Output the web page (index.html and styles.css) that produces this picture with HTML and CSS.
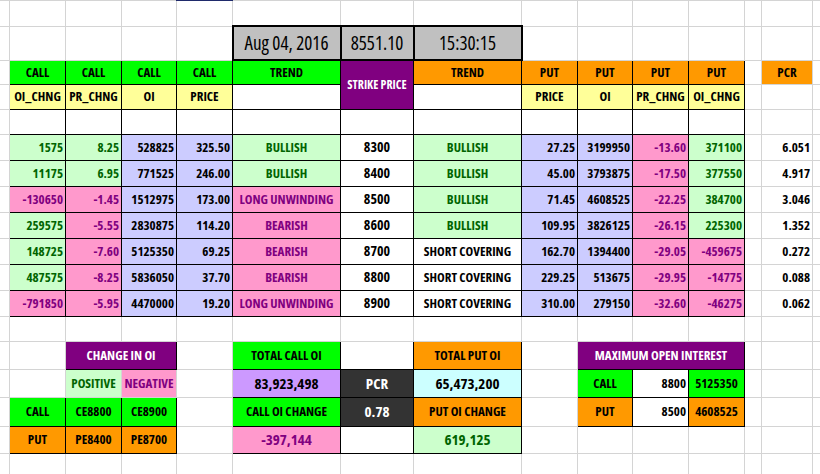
FILE: index.html
```html
<!DOCTYPE html>
<html>
<head>
<meta charset="utf-8">
<link rel="stylesheet" href="styles.css">
</head>
<body>
<table class="sheet">
<colgroup>
<col class="ca"><col class="cb"><col class="cc"><col class="cd"><col class="ce"><col class="cf"><col class="cg"><col class="ch"><col class="ci"><col class="cj"><col class="ck"><col class="cl"><col class="cm"><col class="cn"><col class="co">
</colgroup>
<tr class="r1"><td></td><td></td><td></td><td></td><td class="sel"></td><td></td><td></td><td></td><td></td><td></td><td></td><td></td><td></td><td></td><td></td></tr>
<tr class="r2"><td></td><td></td><td></td><td></td><td></td><td class="top gray tl">Aug 04, 2016</td><td class="top gray">8551.10</td><td class="top gray tr">15:30:15</td><td></td><td></td><td></td><td></td><td></td><td></td><td></td></tr>
<tr class="r3"><td></td><td class="b grn">CALL</td><td class="b grn">CALL</td><td class="b grn">CALL</td><td class="b grn">CALL</td><td class="b grn">TREND</td><td class="b pur sp" rowspan="2">STRIKE PRICE</td><td class="b org">TREND</td><td class="b org">PUT</td><td class="b org">PUT</td><td class="b org">PUT</td><td class="b org">PUT</td><td></td><td class="org">PCR</td><td></td></tr>
<tr class="r4"><td></td><td class="b yel">OI_CHNG</td><td class="b yel">PR_CHNG</td><td class="b yel">OI</td><td class="b yel">PRICE</td><td class="b"></td><td class="b"></td><td class="b yel">PRICE</td><td class="b yel">OI</td><td class="b yel">PR_CHNG</td><td class="b yel">OI_CHNG</td><td></td><td></td><td></td></tr>
<tr class="r5"><td></td><td class="b"></td><td class="b"></td><td class="b"></td><td class="b"></td><td class="b"></td><td class="b"></td><td class="b"></td><td class="b"></td><td class="b"></td><td class="b"></td><td class="b"></td><td></td><td></td><td></td></tr>
<tr class="rd"><td></td><td class="b n lg">1575</td><td class="b n lg">8.25</td><td class="b n lav">528825</td><td class="b n lav">325.50</td><td class="b lg">BULLISH</td><td class="b st">8300</td><td class="b lg">BULLISH</td><td class="b n lav">27.25</td><td class="b n lav">3199950</td><td class="b n pk">-13.60</td><td class="b n lg">371100</td><td></td><td class="n">6.051</td><td></td></tr>
<tr class="rd"><td></td><td class="b n lg">11175</td><td class="b n lg">6.95</td><td class="b n lav">771525</td><td class="b n lav">246.00</td><td class="b lg">BULLISH</td><td class="b st">8400</td><td class="b lg">BULLISH</td><td class="b n lav">45.00</td><td class="b n lav">3793875</td><td class="b n pk">-17.50</td><td class="b n lg">377550</td><td></td><td class="n">4.917</td><td></td></tr>
<tr class="rd"><td></td><td class="b n pk">-130650</td><td class="b n pk">-1.45</td><td class="b n lav">1512975</td><td class="b n lav">173.00</td><td class="b pk">LONG UNWINDING</td><td class="b st">8500</td><td class="b lg">BULLISH</td><td class="b n lav">71.45</td><td class="b n lav">4608525</td><td class="b n pk">-22.25</td><td class="b n lg">384700</td><td></td><td class="n">3.046</td><td></td></tr>
<tr class="rd"><td></td><td class="b n lg">259575</td><td class="b n pk">-5.55</td><td class="b n lav">2830875</td><td class="b n lav">114.20</td><td class="b pk">BEARISH</td><td class="b st">8600</td><td class="b lg">BULLISH</td><td class="b n lav">109.95</td><td class="b n lav">3826125</td><td class="b n pk">-26.15</td><td class="b n lg">225300</td><td></td><td class="n">1.352</td><td></td></tr>
<tr class="rd"><td></td><td class="b n lg">148725</td><td class="b n pk">-7.60</td><td class="b n lav">5125350</td><td class="b n lav">69.25</td><td class="b pk">BEARISH</td><td class="b st">8700</td><td class="b">SHORT COVERING</td><td class="b n lav">162.70</td><td class="b n lav">1394400</td><td class="b n pk">-29.05</td><td class="b n pk">-459675</td><td></td><td class="n">0.272</td><td></td></tr>
<tr class="rd"><td></td><td class="b n lg">487575</td><td class="b n pk">-8.25</td><td class="b n lav">5836050</td><td class="b n lav">37.70</td><td class="b pk">BEARISH</td><td class="b st">8800</td><td class="b">SHORT COVERING</td><td class="b n lav">229.25</td><td class="b n lav">513675</td><td class="b n pk">-29.95</td><td class="b n pk">-14775</td><td></td><td class="n">0.088</td><td></td></tr>
<tr class="rd"><td></td><td class="b n pk">-791850</td><td class="b n pk">-5.95</td><td class="b n lav">4470000</td><td class="b n lav">19.20</td><td class="b pk">LONG UNWINDING</td><td class="b st">8900</td><td class="b">SHORT COVERING</td><td class="b n lav">310.00</td><td class="b n lav">279150</td><td class="b n pk">-32.60</td><td class="b n pk">-46275</td><td></td><td class="n">0.062</td><td></td></tr>
<tr class="r13"><td></td><td></td><td></td><td></td><td></td><td></td><td></td><td></td><td></td><td></td><td></td><td></td><td></td><td></td><td></td></tr>
<tr class="r14"><td></td><td></td><td class="b pur" colspan="2">CHANGE IN OI</td><td></td><td class="b grn">TOTAL CALL OI</td><td class="b"></td><td class="b org">TOTAL PUT OI</td><td></td><td class="b pur" colspan="3">MAXIMUM OPEN INTEREST</td><td></td><td></td><td></td></tr>
<tr class="r15"><td></td><td></td><td class="lg">POSITIVE</td><td class="pk">NEGATIVE</td><td></td><td class="b vio big">83,923,498</td><td class="b dk big">PCR</td><td class="b cy big">65,473,200</td><td></td><td class="b grn">CALL</td><td class="b n wt">8800</td><td class="b grn">5125350</td><td></td><td></td><td></td></tr>
<tr class="r16"><td></td><td class="b grn">CALL</td><td class="b grn">CE8800</td><td class="b grn">CE8900</td><td></td><td class="b grn">CALL OI CHANGE</td><td class="b dk big">0.78</td><td class="b org">PUT OI CHANGE</td><td></td><td class="b org">PUT</td><td class="b n wt">8500</td><td class="b org">4608525</td><td></td><td></td><td></td></tr>
<tr class="r17"><td></td><td class="b org">PUT</td><td class="b org">PE8400</td><td class="b org">PE8700</td><td></td><td class="b pk big">-397,144</td><td class="b"></td><td class="b lg big">619,125</td><td></td><td></td><td></td><td></td><td></td><td></td><td></td></tr>
<tr class="r18"><td></td><td></td><td></td><td></td><td></td><td></td><td></td><td></td><td></td><td></td><td></td><td></td><td></td><td></td><td></td></tr>
</table>
</body>
</html>
```

FILE: styles.css
```css
html, body {
  margin: 0;
  padding: 0;
  background: #ffffff;
  overflow: hidden;
}
.sheet {
  border-collapse: collapse;
  table-layout: fixed;
  width: 840px;
  font-family: "Open Sans", "DejaVu Sans Condensed", sans-serif;
  font-stretch: 75%;
  font-weight: bold;
  font-size: 13px;
  color: #000;
  margin-top: -1px;
  margin-left: -1px;
}
.ca { width: 10px; }
.cb, .cc, .ce, .ci, .ck, .cl { width: 56px; }
.cd, .cj { width: 55px; }
.cf, .ch { width: 108px; }
.cg { width: 73px; }
.cm { width: 17px; }
.cn { width: 51px; }
.co { width: 27px; }
.sheet td {
  border: 1px solid #d4d4d4;
  padding: 0 2px;
  text-align: center;
  white-space: nowrap;
  overflow: hidden;
  line-height: 1;
}
.r1 { height: 26px; }
.r2 { height: 34px; }
.r3 { height: 24px; }
.r4 { height: 25px; }
.r5 { height: 25px; }
.rd { height: 26px; }
.r13 { height: 25px; }
.r14 { height: 28px; }
.r15 { height: 28px; }
.r16 { height: 29px; }
.r17 { height: 27px; }
.r18 { height: 30px; }
.sel { border-top: 2px solid #1f2a6b !important; }
.sheet td.b { border: 1px solid #000; }
.sheet td.top {
  border: 2px solid #000;
  font-weight: normal;
  font-size: 19px;
}
.gray { background: #c0c0c0; }
.grn { background: #00ff00; }
.org { background: #ff9900; }
.pur { background: #800080; color: #fff; }
.yel { background: #ffff99; }
.lg { background: #ccffcc; color: #006400; }
.pk { background: #ff99cc; color: #800080; }
.lav { background: #ccccff; }
.vio { background: #cc99ff; }
.cy { background: #ccffff; }
.dk { background: #333333; color: #fff; }
.wt { background: #fff; }
.sp { font-size: 12px; }
.st { font-size: 14px; }
.big { font-size: 15px; }
.sheet td.n { text-align: right; }
```
